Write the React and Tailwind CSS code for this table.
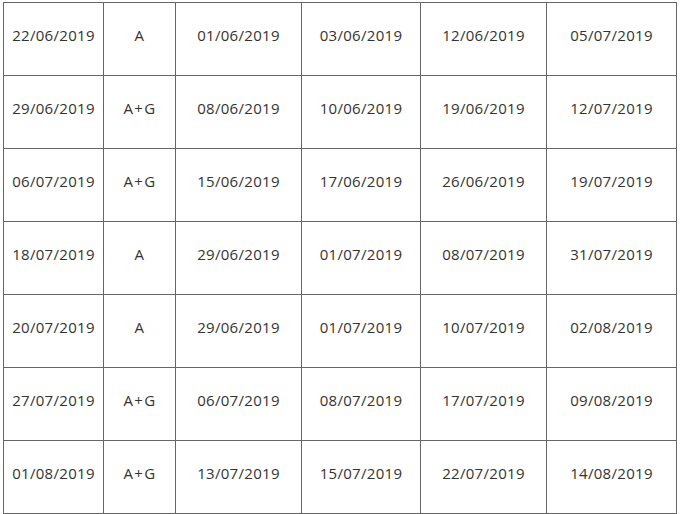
import React from "react";

const rows = [
  ["22/06/2019", "A", "01/06/2019", "03/06/2019", "12/06/2019", "05/07/2019"],
  ["29/06/2019", "A+G", "08/06/2019", "10/06/2019", "19/06/2019", "12/07/2019"],
  ["06/07/2019", "A+G", "15/06/2019", "17/06/2019", "26/06/2019", "19/07/2019"],
  ["18/07/2019", "A", "29/06/2019", "01/07/2019", "08/07/2019", "31/07/2019"],
  ["20/07/2019", "A", "29/06/2019", "01/07/2019", "10/07/2019", "02/08/2019"],
  ["27/07/2019", "A+G", "06/07/2019", "08/07/2019", "17/07/2019", "09/08/2019"],
  ["01/08/2019", "A+G", "13/07/2019", "15/07/2019", "22/07/2019", "14/08/2019"],
];

export default function App() {
  return (
    <div className="bg-white w-[683px] h-[514px] overflow-hidden pt-[2px] pl-[3px]">
      <div
        className="grid grid-cols-[100px_72px_126px_119px_126px_130px] w-fit border-l border-t border-[#666666] text-[15px] tracking-[0.3px] text-[#333333]"
        style={{ fontFamily: '"Open Sans", "Noto Sans", sans-serif' }}
      >
        {rows.map((r, i) =>
          r.map((c, j) => (
            <div
              key={i + "-" + j}
              className="h-[73px] border-r border-b border-[#666666] flex items-center justify-center pb-[7px]"
            >
              {c === "A+G" ? (
                <span>
                  A<span className="mx-[1px]">+</span>G
                </span>
              ) : (
                c
              )}
            </div>
          ))
        )}
      </div>
    </div>
  );
}
